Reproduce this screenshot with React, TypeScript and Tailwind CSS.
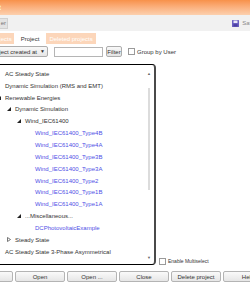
import React from 'react'

type Row = { label: string; level: number; toggle?: 'open' | 'closed'; blue?: boolean }

const rows: Row[] = [
  { label: 'AC Steady State', level: 0 },
  { label: 'Dynamic Simulation (RMS and EMT)', level: 0 },
  { label: 'Renewable Energies', level: 0, toggle: 'open' },
  { label: 'Dynamic Simulation', level: 1, toggle: 'open' },
  { label: 'Wind_IEC61400', level: 2, toggle: 'open' },
  { label: 'Wind_IEC61400_Type4B', level: 3, blue: true },
  { label: 'Wind_IEC61400_Type4A', level: 3, blue: true },
  { label: 'Wind_IEC61400_Type3B', level: 3, blue: true },
  { label: 'Wind_IEC61400_Type3A', level: 3, blue: true },
  { label: 'Wind_IEC61400_Type2', level: 3, blue: true },
  { label: 'Wind_IEC61400_Type1B', level: 3, blue: true },
  { label: 'Wind_IEC61400_Type1A', level: 3, blue: true },
  { label: '...Miscellaneous...', level: 2, toggle: 'open' },
  { label: 'DCPhotovoltaicExample', level: 3, blue: true },
  { label: 'Steady State', level: 1, toggle: 'closed' },
  { label: 'AC Steady State 3-Phase Asymmetrical', level: 0 },
]

const indent = ['pl-[15px]', 'pl-[25px]', 'pl-[35px]', 'pl-[45px]']

function Toggle({ kind }: { kind: 'open' | 'closed' }) {
  if (kind === 'open') {
    return (
      <svg width="4" height="4" viewBox="0 0 4 4" className="mr-[4px] shrink-0">
        <polygon points="4,0 4,4 0,4" fill="#222" />
      </svg>
    )
  }
  return (
    <svg width="4" height="5" viewBox="0 0 4 5" className="mr-[4px] shrink-0">
      <polygon points="0.5,0.5 3.5,2.5 0.5,4.5" fill="none" stroke="#555" strokeWidth="0.8" />
    </svg>
  )
}

function TreeRow({ row }: { row: Row }) {
  // toggle rows: triangle sits 8px ahead of the text
  const pad = row.toggle ? row.level * 10 + 7 : 0
  return (
    <div
      className={`flex items-center h-[11.85px] whitespace-nowrap ${row.toggle ? '' : indent[row.level]} ${row.blue ? 'text-[#4f4fe6]' : 'text-[#333]'}`}
      style={row.toggle ? { paddingLeft: pad } : undefined}
    >
      {row.toggle && <Toggle kind={row.toggle} />}
      <span>{row.label}</span>
    </div>
  )
}

function Btn({ label }: { label: string }) {
  return (
    <div className="w-[50px] h-[11px] shrink-0 flex items-center justify-center rounded-[2px] border border-[#b4b4b4] bg-gradient-to-b from-[#fafafa] to-[#e6e6e6] text-[#333]">
      {label}
    </div>
  )
}

export default function App() {
  return (
    <div
      className="w-[250px] h-[290px] overflow-hidden bg-white text-[6px] leading-none"
      style={{ fontFamily: '"Liberation Sans", Arial, sans-serif' }}
    >
      {/* title bar */}
      <div className="h-[15px] flex items-center bg-gradient-to-b from-[#f7914a] to-[#fcd0ae] text-white text-[7px]">
        <span className="-ml-[1px]">t</span>
      </div>

      {/* toolbar */}
      <div className="h-[16px] flex items-center justify-between bg-[#f1f1f1]">
        <div className="h-[11px] w-[8px] flex items-center justify-end pr-[1px] bg-[#e3e3e3] border-y border-r border-[#d0d0d0] text-[#777]">
          er
        </div>
        <div className="flex items-center gap-[3px] text-[#888] -mr-[6px]">
          <svg width="7" height="7" viewBox="0 0 7 7">
            <rect x="0" y="0" width="7" height="7" rx="0.5" fill="#6a5fc1" />
            <rect x="1.5" y="0.5" width="4" height="2.5" fill="#e8e6f7" />
            <rect x="1.5" y="4.2" width="4" height="2.3" fill="#4a3fa0" />
          </svg>
          <span>Save</span>
        </div>
      </div>

      {/* tabs */}
      <div className="h-[13px] flex items-end gap-[4px] pt-[2px]">
        <div className="-ml-[12px] h-[11px] px-[2px] flex items-center bg-[#fcd6ba] text-white">Projects</div>
        <div className="h-[11px] px-[3px] flex items-center bg-white text-[#333]">Project</div>
        <div className="h-[11px] px-[3px] flex items-center bg-[#fcd6ba] text-white">Deleted projects</div>
      </div>

      {/* filter row */}
      <div className="flex items-center mt-[2px] h-[11px]">
        <div className="-ml-[13px] w-[61px] h-[11px] flex items-center justify-between px-[2px] rounded-[2px] border border-[#adadad] bg-gradient-to-b from-[#f8f8f8] to-[#e7e7e7] text-[#333]">
          <span className="whitespace-nowrap">Project created at</span>
          <span className="text-[5px]">▼</span>
        </div>
        <div className="ml-[6px] w-[49px] h-[10px] border border-[#b5b5b5] bg-white" />
        <div className="ml-[3px] w-[16px] h-[11px] flex items-center justify-center rounded-[2px] border border-[#adadad] bg-gradient-to-b from-[#f8f8f8] to-[#e4e4e4] text-[#333]">
          Filter
        </div>
        <div className="ml-[6px] w-[7px] h-[7px] border border-[#9a9a9a] bg-white" />
        <span className="ml-[2px] text-[#333] whitespace-nowrap">Group by User</span>
      </div>

      {/* tree + multiselect */}
      <div className="flex items-end mt-[7px]">
        <div className="-ml-[10px] w-[166px] h-[201px] shrink-0 flex border-t border-b border-black border-r-2 border-r-[#4a4a4a] rounded-r-[4px] bg-white">
          <div className="flex-1 pt-[3px]">
            {rows.map((r) => (
              <TreeRow key={r.label + r.level} row={r} />
            ))}
          </div>
          <div className="w-[8px] mr-[1px] flex flex-col items-center pt-[7px] pb-[4px]">
            <span className="text-[4px] text-[#666]">▲</span>
            <div className="w-[2px] h-[102px] mt-[12px] bg-[#dcdcdc]" />
            <div className="flex-1" />
            <span className="text-[4px] text-[#666]">▼</span>
          </div>
        </div>
        <div className="ml-[3px] flex items-center">
          <div className="w-[7px] h-[7px] border border-[#9a9a9a] bg-white" />
          <span className="ml-[2px] text-[5px] text-[#333] whitespace-nowrap">Enable Multiselect</span>
        </div>
      </div>

      {/* bottom buttons */}
      <div className="flex gap-[2px] mt-[6px] -ml-[37px]">
        <Btn label="Select" />
        <Btn label="Open" />
        <Btn label="Open ..." />
        <Btn label="Close" />
        <Btn label="Delete project" />
        <Btn label="Help" />
      </div>
    </div>
  )
}
